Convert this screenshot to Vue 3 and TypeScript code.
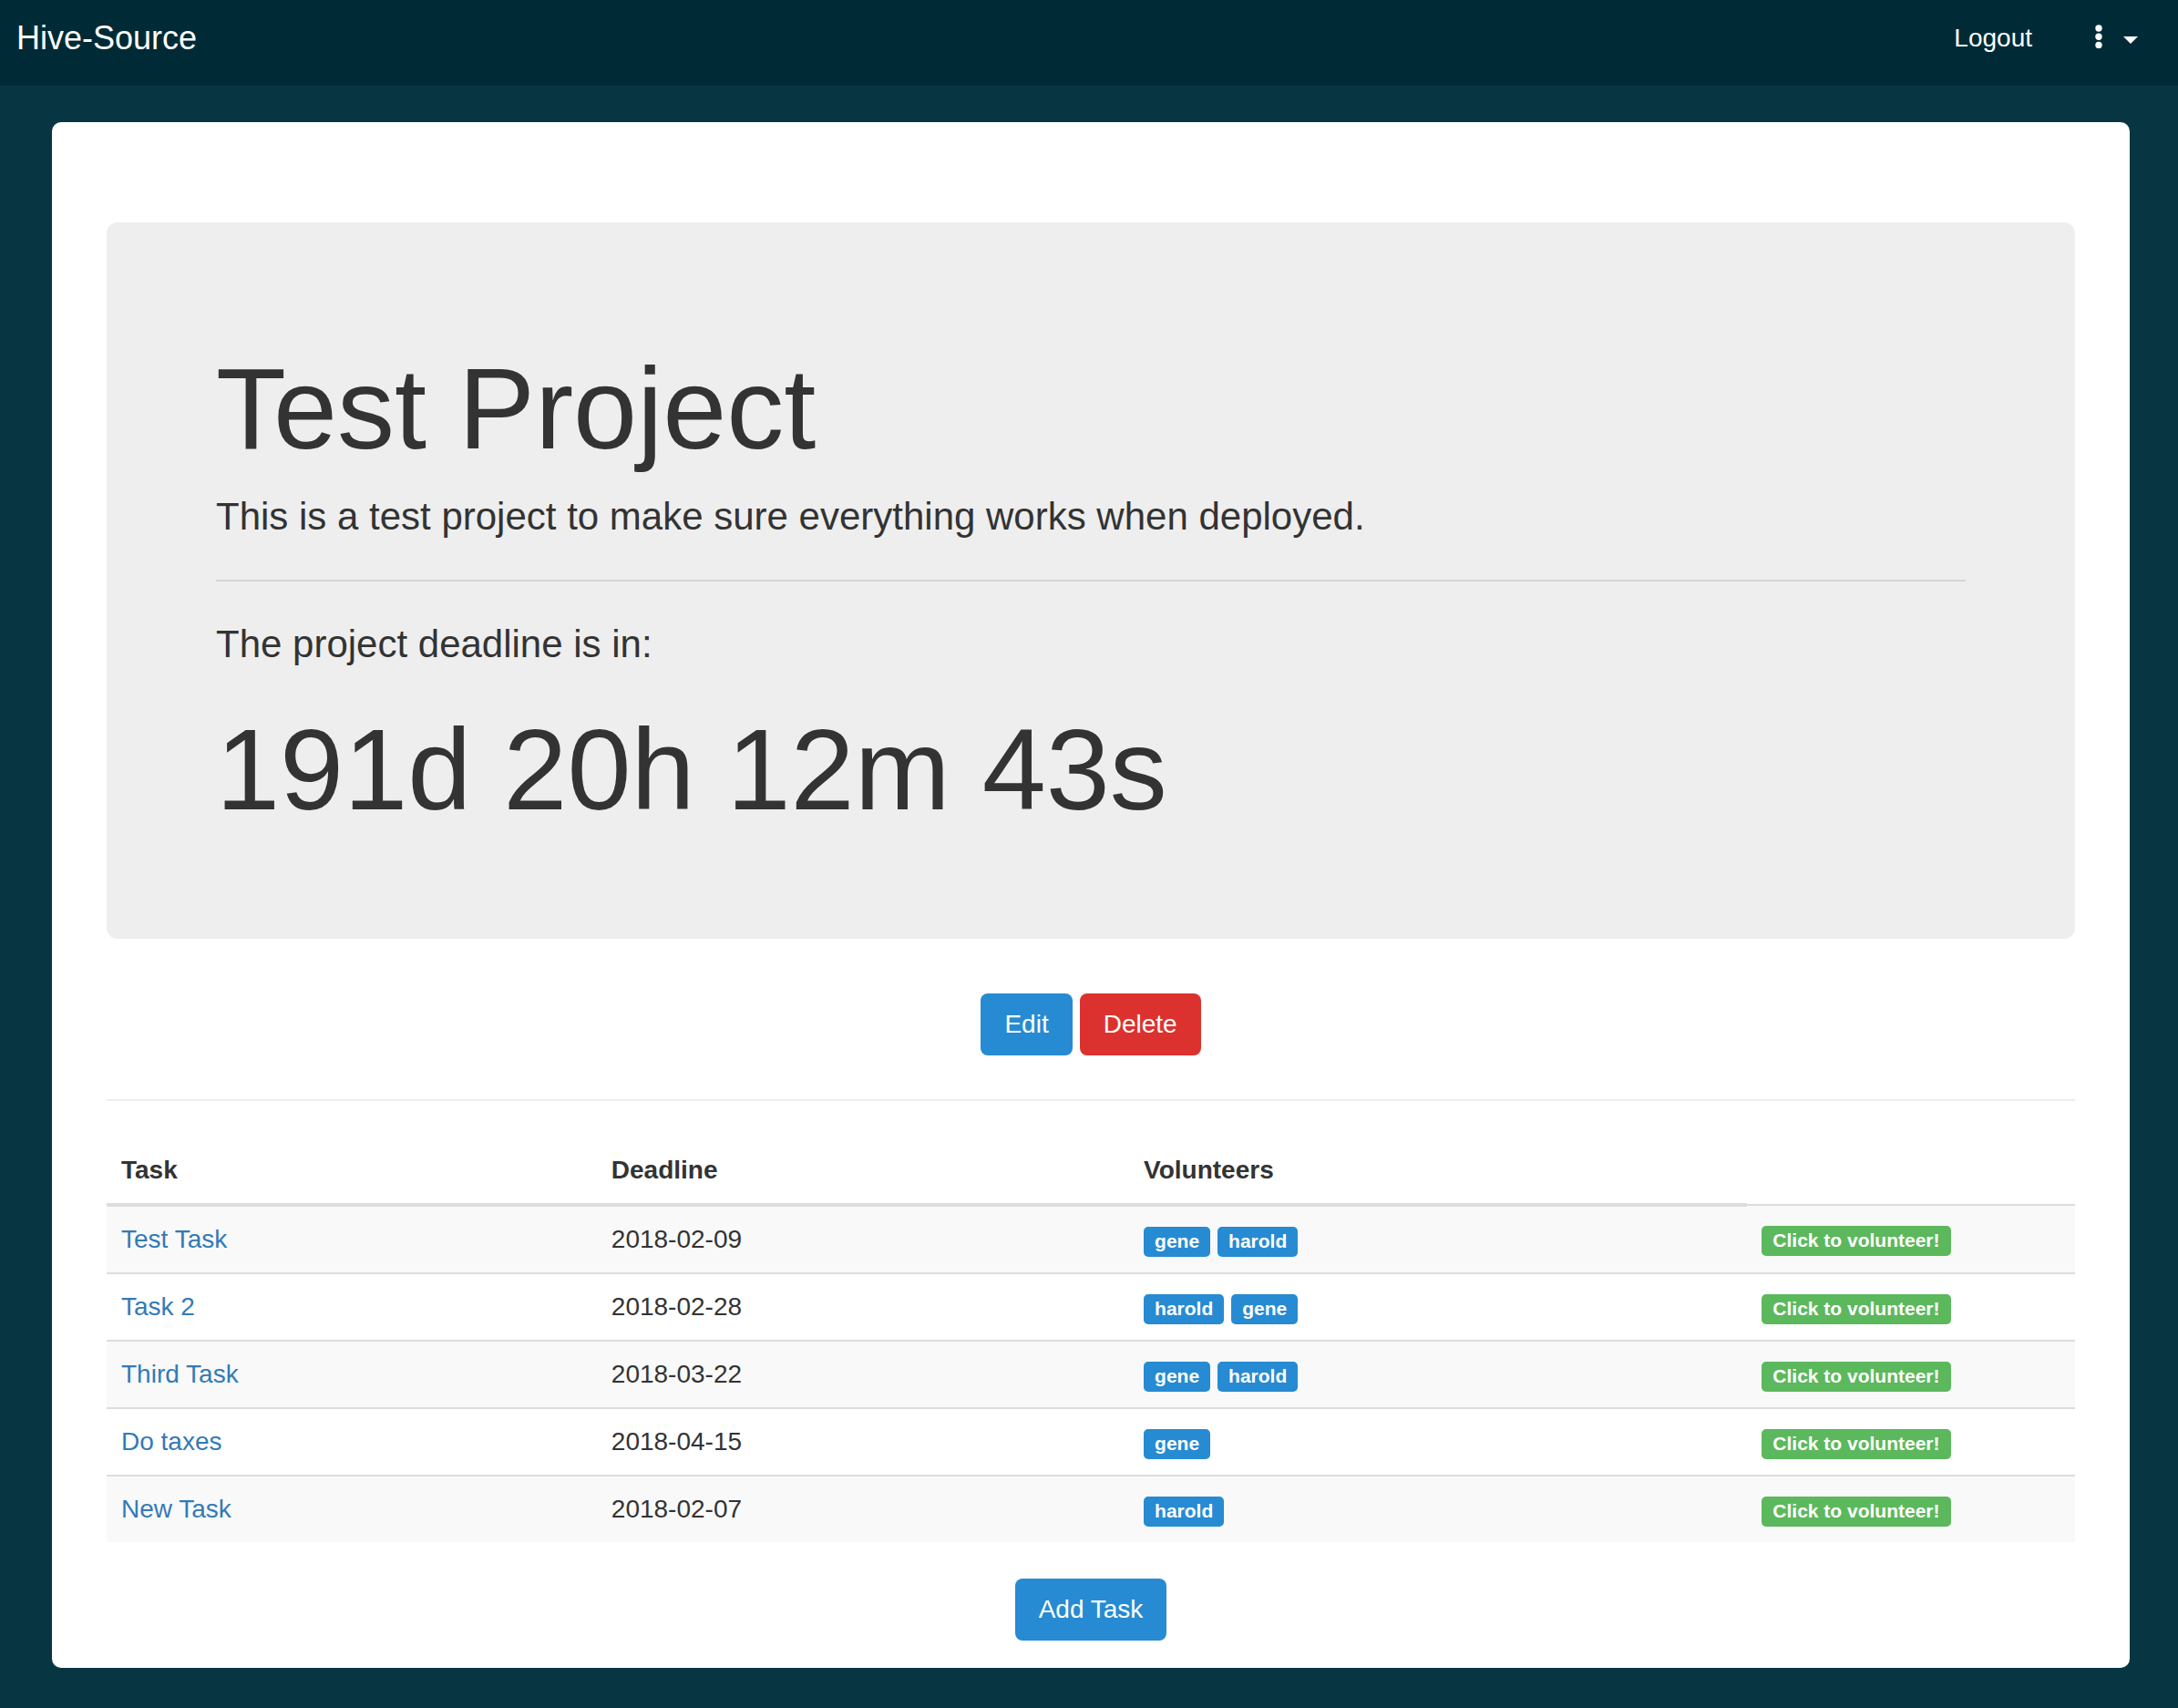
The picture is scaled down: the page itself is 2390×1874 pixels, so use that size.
<script setup lang="ts">
import { onMounted, onUnmounted, ref, computed } from 'vue'

interface Task {
  name: string
  deadline: string
  volunteers: string[]
}

const tasks = ref<Task[]>([
  { name: 'Test Task', deadline: '2018-02-09', volunteers: ['gene', 'harold'] },
  { name: 'Task 2', deadline: '2018-02-28', volunteers: ['harold', 'gene'] },
  { name: 'Third Task', deadline: '2018-03-22', volunteers: ['gene', 'harold'] },
  { name: 'Do taxes', deadline: '2018-04-15', volunteers: ['gene'] },
  { name: 'New Task', deadline: '2018-02-07', volunteers: ['harold'] },
])

const days = 191
const hours = 20
const minutes = 12
const seconds = 43
const countdown = computed(() => `${days}d ${hours}h ${minutes}m ${seconds}s`)

const menuOpen = ref(false)
const closeMenu = (event: KeyboardEvent) => {
  if (event.key === 'Escape') menuOpen.value = false
}
onMounted(() => window.addEventListener('keydown', closeMenu))
onUnmounted(() => window.removeEventListener('keydown', closeMenu))
</script>

<template>
  <div class="page">
    <nav class="navbar">
      <a class="brand" href="#">Hive-Source</a>
      <div class="nav-right">
        <a class="nav-link" href="#logout">Logout</a>
        <button
          class="menu-toggle"
          type="button"
          aria-label="Menu"
          :aria-expanded="menuOpen"
          @click="menuOpen = !menuOpen"
        >
          <svg class="dots" viewBox="0 0 8 28" aria-hidden="true">
            <circle cx="4" cy="5" r="3.7" />
            <circle cx="4" cy="14.2" r="3.7" />
            <circle cx="4" cy="23.4" r="3.7" />
          </svg>
          <svg class="caret" viewBox="0 0 16 8" aria-hidden="true">
            <path d="M0 0H16L8 8Z" />
          </svg>
        </button>
      </div>
    </nav>

    <main class="card">
      <section class="hero">
        <h1>Test Project</h1>
        <p>This is a test project to make sure everything works when deployed.</p>
        <hr />
        <p>The project deadline is in:</p>
        <h1 class="countdown">{{ countdown }}</h1>
      </section>

      <div class="actions">
        <button class="btn" type="button">Edit</button>
        <button class="btn danger" type="button">Delete</button>
      </div>

      <hr class="divider" />

      <table class="tasks">
        <colgroup>
          <col class="col-task" />
          <col class="col-deadline" />
          <col class="col-volunteers" />
          <col />
        </colgroup>
        <thead>
          <tr>
            <th scope="col">Task</th>
            <th scope="col">Deadline</th>
            <th scope="col">Volunteers</th>
          </tr>
        </thead>
        <tbody>
          <tr v-for="task in tasks" :key="task.name">
            <td><a href="#task">{{ task.name }}</a></td>
            <td>{{ task.deadline }}</td>
            <td>
              <span v-for="person in task.volunteers" :key="person" class="label">{{ person }}</span>
            </td>
            <td><button class="label success" type="button">Click to volunteer!</button></td>
          </tr>
        </tbody>
      </table>

      <div class="actions">
        <button class="btn" type="button">Add Task</button>
      </div>
    </main>
  </div>
</template>

<style>
body {
  margin: 0;
  background: #073642;
}
</style>

<style scoped>
.page {
  font-family: "Liberation Sans", Arial, sans-serif;
  font-size: 28px;
  line-height: 40px;
  color: #333;
}

.page * {
  box-sizing: border-box;
}

button {
  font-family: inherit;
  border: 0;
  cursor: pointer;
}

.navbar {
  display: flex;
  justify-content: space-between;
  align-items: flex-start;
  padding: 22px 44px 32px 18px;
  background: #002b36;
}

.brand,
.nav-link {
  color: #fff;
  text-decoration: none;
}

.brand {
  font-size: 36px;
}

.nav-right {
  display: flex;
  gap: 69px;
}

.menu-toggle {
  display: flex;
  align-items: flex-start;
  gap: 23px;
  padding: 4px 0 0;
  background: none;
}

.menu-toggle svg {
  display: block;
  fill: #fff;
}

.dots {
  width: 8px;
  height: 28px;
}

.caret {
  width: 16px;
  height: 8px;
  margin-top: 14px;
}

.card {
  margin: 40px 53px 44px 57px;
  padding: 110px 60px 30px;
  background: #fff;
  border-radius: 10px;
}

.hero {
  padding: 136px 120px 116px;
  margin-bottom: 60px;
  background: #eee;
  border-radius: 12px;
}

.hero h1 {
  margin: 0 0 20px;
  font-size: 126px;
  line-height: 138px;
  font-weight: 400;
}

.hero p {
  margin: 0;
  font-size: 42px;
  line-height: 58px;
}

.hero hr {
  height: 2px;
  margin: 40px 0;
  border: 0;
  background: #d5d5d5;
}

.hero .countdown {
  margin: 40px 0 0;
}

.actions {
  display: flex;
  justify-content: center;
  gap: 8px;
}

.btn {
  padding: 14px 26px;
  font-size: 28px;
  line-height: 40px;
  color: #fff;
  background: #268bd2;
  border-radius: 8px;
}

.danger {
  background: #dc322f;
}

.divider {
  height: 2px;
  margin: 48px 0 40px;
  border: 0;
  background: #eee;
}

.tasks {
  width: 100%;
  margin-bottom: 40px;
  border-collapse: collapse;
  table-layout: fixed;
}

.col-task {
  width: 24.9%;
}

.col-deadline {
  width: 27.05%;
}

.col-volunteers {
  width: 31.4%;
}

.tasks th,
.tasks td {
  padding: 16px;
  text-align: left;
  vertical-align: top;
}

.tasks th {
  border-bottom: 4px solid #ddd;
}

.tasks td {
  border-top: 2px solid #ddd;
}

.tasks tbody tr:nth-child(odd) {
  background: #f9f9f9;
}

.tasks a {
  color: #337ab7;
  text-decoration: none;
}

.label {
  display: inline-block;
  padding: 4px 12px 6px;
  margin-right: 8px;
  font-size: 21px;
  line-height: 23px;
  font-weight: 700;
  color: #fff;
  vertical-align: baseline;
  background: #268bd2;
  border-radius: 5px;
}

.success {
  background: #5cb85c;
}
</style>
